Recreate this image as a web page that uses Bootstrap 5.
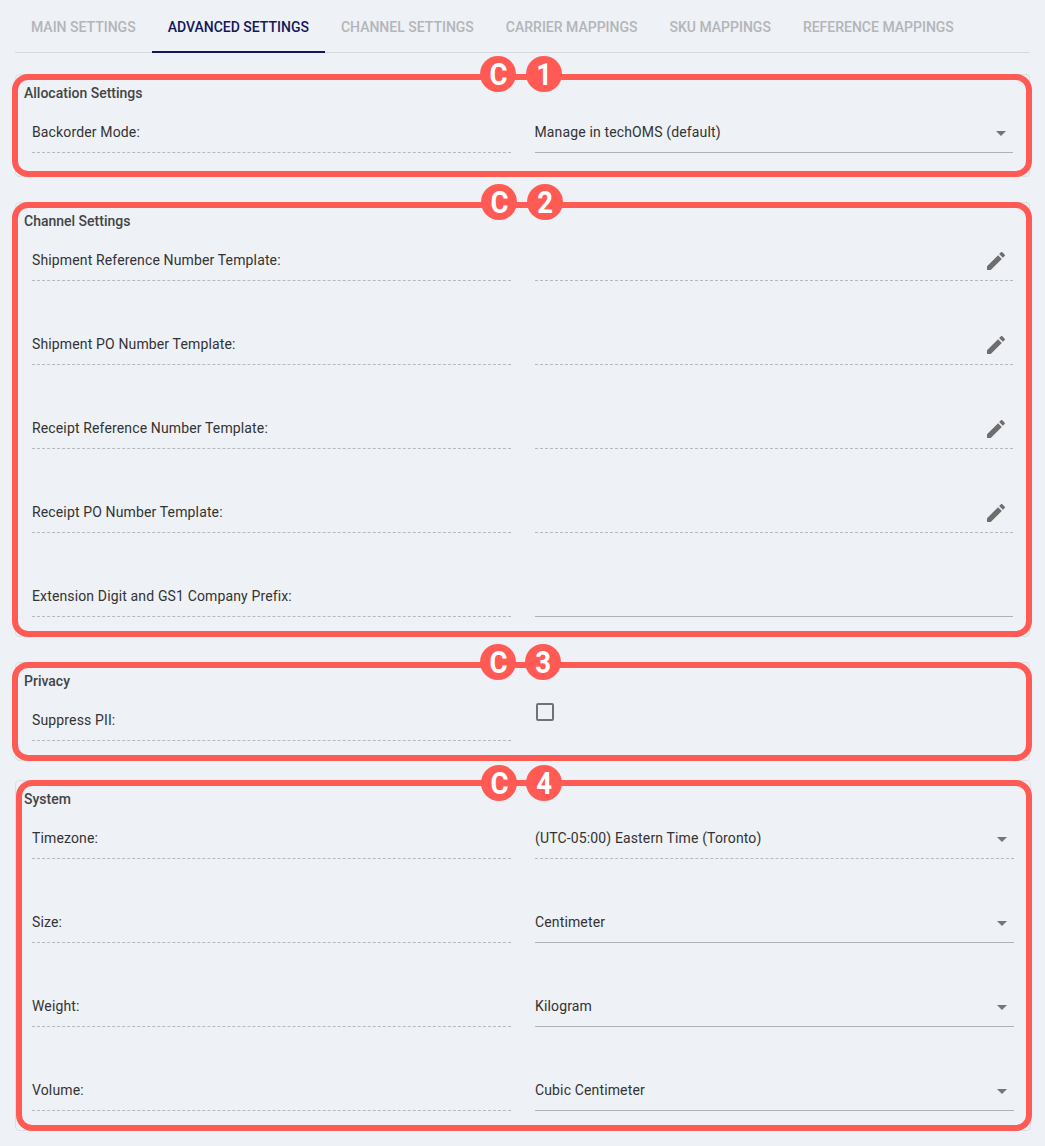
<!DOCTYPE html>
<html lang="en">
<head>
<meta charset="utf-8">
<title>Advanced Settings</title>
<link href="https://cdn.jsdelivr.net/npm/bootstrap@5.3.0/dist/css/bootstrap.min.css" rel="stylesheet">
<style>
html, body { background: #eef1f6; }
body { font-family: Roboto, "Liberation Sans", sans-serif; font-size: 14px; color: #333; padding: 0 15.5px 0 15px; }
.tabbar { height: 53px; border-bottom: 1px solid #d5d8dd; margin-bottom: 21px; }
.tabbar .nav-link { height: 53px; padding: 0 16px; line-height: 54px; font-size: 14px; font-weight: 500; color: #b3b5b9; text-transform: uppercase; }
.tabbar .nav-link.active { color: #14185a; border-bottom: 2px solid #14185a; }
.cfg-card { background: transparent; border: 1px solid #dcdfe4; border-radius: 4px; margin-bottom: 25px; padding: 8px 8px 19px; }
.cfg-card.roomy { padding-bottom: 23px; }
.cfg-card.tight { margin-bottom: 19px; }
.cfg-card.wide { margin-right: -1px; }
.cfg-title { font-size: 14px; font-weight: 500; line-height: 20px; color: #444; margin: 0 0 9px; }
.cfg-grid { margin: 0 -4.5px 0 -4px; --bs-gutter-x: 24px; row-gap: 43px; }
.cfg-field { height: 41px; display: flex; align-items: center; justify-content: space-between; letter-spacing: .14px; border-bottom: 1px dashed #b7b9bd; padding-top: 1px; }
.cfg-field.solid { border-bottom: 1px solid #b0b2b7; }
.cfg-field.plain { border-bottom: 0; }
.cfg-box { appearance: none; width: 18px; height: 18px; margin: 2px 0 0 1.5px; align-self: flex-start; border: 2px solid #6f7276; border-radius: 2px; background: transparent; }
.cfg-ico { flex: none; margin-right: 5px; fill: #6e6e6e; }
.cfg-ico.arrow { margin-right: 0; fill: #757575; }
.red-frame { position: absolute; top: -1px; bottom: -1px; left: -4px; right: -3px; border: 6px solid #ff5a54; border-radius: 16px; pointer-events: none; }
.wide .red-frame { left: 0; right: -2px; }
.red-dot { position: absolute; top: -19px; width: 36px; height: 36px; border-radius: 50%; background: #ff5a54; color: #fff; font-weight: 700; font-size: 32px; line-height: 36px; text-align: center; }
.wide .red-dot { top: -16px; }
.red-dot span { display: inline-block; transform: scaleX(.86); }
.dc1 { left: 464px; } .dn1 { left: 510px; }
.dc2 { left: 465px; } .dn2 { left: 511px; }
.dc3 { left: 464px; } .dn3 { left: 509px; }
.dc4 { left: 465px; } .dn4 { left: 510px; }
</style>
</head>
<body>
<ul class="nav tabbar">
  <li class="nav-item"><a class="nav-link" href="#">Main Settings</a></li>
  <li class="nav-item"><a class="nav-link active" href="#">Advanced Settings</a></li>
  <li class="nav-item"><a class="nav-link" href="#">Channel Settings</a></li>
  <li class="nav-item"><a class="nav-link" href="#">Carrier Mappings</a></li>
  <li class="nav-item"><a class="nav-link" href="#">SKU Mappings</a></li>
  <li class="nav-item"><a class="nav-link" href="#">Reference Mappings</a></li>
</ul>

<section class="card cfg-card roomy">
  <h6 class="cfg-title">Allocation Settings</h6>
  <div class="row cfg-grid">
    <div class="col-6"><div class="cfg-field">Backorder Mode:</div></div>
    <div class="col-6"><div class="cfg-field solid">Manage in techOMS (default)<svg class="cfg-ico arrow" width="24" height="24" viewBox="0 0 24 24"><path d="M7 10l5 5 5-5z"/></svg></div></div>
  </div>
  <div class="red-frame"></div><div class="red-dot dc1"><span>C</span></div><div class="red-dot dn1"><span>1</span></div>
</section>

<section class="card cfg-card">
  <h6 class="cfg-title">Channel Settings</h6>
  <div class="row cfg-grid">
    <div class="col-6"><div class="cfg-field">Shipment Reference Number Template:</div></div>
    <div class="col-6"><div class="cfg-field"><span></span><svg class="cfg-ico" width="24" height="24" viewBox="0 0 24 24"><path d="M3 17.25V21h3.75L17.81 9.94l-3.75-3.75L3 17.25zM20.71 7.04c.39-.39.39-1.02 0-1.41l-2.34-2.34c-.39-.39-1.02-.39-1.41 0l-1.83 1.83 3.75 3.75 1.83-1.83z"/></svg></div></div>
    <div class="col-6"><div class="cfg-field">Shipment PO Number Template:</div></div>
    <div class="col-6"><div class="cfg-field"><span></span><svg class="cfg-ico" width="24" height="24" viewBox="0 0 24 24"><path d="M3 17.25V21h3.75L17.81 9.94l-3.75-3.75L3 17.25zM20.71 7.04c.39-.39.39-1.02 0-1.41l-2.34-2.34c-.39-.39-1.02-.39-1.41 0l-1.83 1.83 3.75 3.75 1.83-1.83z"/></svg></div></div>
    <div class="col-6"><div class="cfg-field">Receipt Reference Number Template:</div></div>
    <div class="col-6"><div class="cfg-field"><span></span><svg class="cfg-ico" width="24" height="24" viewBox="0 0 24 24"><path d="M3 17.25V21h3.75L17.81 9.94l-3.75-3.75L3 17.25zM20.71 7.04c.39-.39.39-1.02 0-1.41l-2.34-2.34c-.39-.39-1.02-.39-1.41 0l-1.83 1.83 3.75 3.75 1.83-1.83z"/></svg></div></div>
    <div class="col-6"><div class="cfg-field">Receipt PO Number Template:</div></div>
    <div class="col-6"><div class="cfg-field"><span></span><svg class="cfg-ico" width="24" height="24" viewBox="0 0 24 24"><path d="M3 17.25V21h3.75L17.81 9.94l-3.75-3.75L3 17.25zM20.71 7.04c.39-.39.39-1.02 0-1.41l-2.34-2.34c-.39-.39-1.02-.39-1.41 0l-1.83 1.83 3.75 3.75 1.83-1.83z"/></svg></div></div>
    <div class="col-6"><div class="cfg-field">Extension Digit and GS1 Company Prefix:</div></div>
    <div class="col-6"><div class="cfg-field solid"></div></div>
  </div>
  <div class="red-frame"></div><div class="red-dot dc2"><span>C</span></div><div class="red-dot dn2"><span>2</span></div>
</section>

<section class="card cfg-card tight">
  <h6 class="cfg-title">Privacy</h6>
  <div class="row cfg-grid">
    <div class="col-6"><div class="cfg-field">Suppress PII:</div></div>
    <div class="col-6"><div class="cfg-field plain"><input class="cfg-box" type="checkbox" aria-label="Suppress PII"></div></div>
  </div>
  <div class="red-frame"></div><div class="red-dot dc3"><span>C</span></div><div class="red-dot dn3"><span>3</span></div>
</section>

<section class="card cfg-card wide">
  <h6 class="cfg-title">System</h6>
  <div class="row cfg-grid">
    <div class="col-6"><div class="cfg-field">Timezone:</div></div>
    <div class="col-6"><div class="cfg-field">(UTC-05:00) Eastern Time (Toronto)<svg class="cfg-ico arrow" width="24" height="24" viewBox="0 0 24 24"><path d="M7 10l5 5 5-5z"/></svg></div></div>
    <div class="col-6"><div class="cfg-field">Size:</div></div>
    <div class="col-6"><div class="cfg-field solid">Centimeter<svg class="cfg-ico arrow" width="24" height="24" viewBox="0 0 24 24"><path d="M7 10l5 5 5-5z"/></svg></div></div>
    <div class="col-6"><div class="cfg-field">Weight:</div></div>
    <div class="col-6"><div class="cfg-field solid">Kilogram<svg class="cfg-ico arrow" width="24" height="24" viewBox="0 0 24 24"><path d="M7 10l5 5 5-5z"/></svg></div></div>
    <div class="col-6"><div class="cfg-field">Volume:</div></div>
    <div class="col-6"><div class="cfg-field solid">Cubic Centimeter<svg class="cfg-ico arrow" width="24" height="24" viewBox="0 0 24 24"><path d="M7 10l5 5 5-5z"/></svg></div></div>
  </div>
  <div class="red-frame"></div><div class="red-dot dc4"><span>C</span></div><div class="red-dot dn4"><span>4</span></div>
</section>
<script src="https://cdn.jsdelivr.net/npm/bootstrap@5.3.0/dist/js/bootstrap.bundle.min.js"></script>
</body>
</html>
